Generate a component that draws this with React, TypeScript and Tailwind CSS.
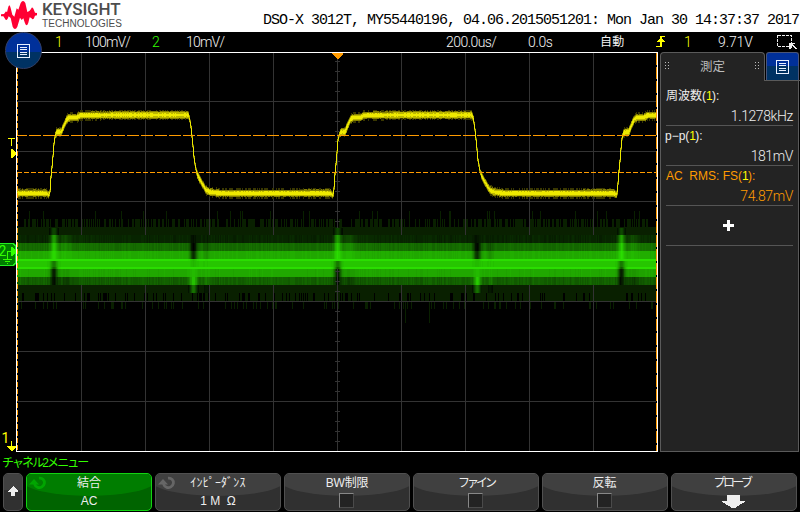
import React from "react";

const LEFT = 17;
const PERIOD = 283.7;

function rng(seed: number) {
  let s = seed;
  return () => {
    s = (s * 1664525 + 1013904223) % 4294967296;
    return s / 4294967296;
  };
}

const SHAPE: [number, number][] = [
  [-64, 193], [47, 193.3], [49.3, 195.5], [50.2, 190], [51, 177], [52.7, 160], [54.3, 140], [56, 133], [58, 132],
  [61.5, 132], [63.3, 127], [67, 119], [70, 117.5], [77, 117.5], [80, 115.4], [120, 115], [188, 115],
  [189.3, 117], [191, 127], [192.7, 143], [194.3, 160], [196.7, 173], [200, 180], [203, 185], [206, 190],
  [210, 192], [220, 193.3], [331, 193.3],
];

function level(x: number) {
  let t = x;
  while (t > 300) t -= PERIOD;
  for (let i = 1; i < SHAPE.length; i++) {
    const [x1, y1] = SHAPE[i];
    const [x0, y0] = SHAPE[i - 1];
    if (t <= x1) return y0 + ((y1 - y0) * (t - x0)) / (x1 - x0);
  }
  return 193.3;
}

type Layer = Map<string, string>;
const put = (layer: Layer, color: string, x: number, y0: number, y1: number) => {
  if (y1 <= y0) return;
  layer.set(color, (layer.get(color) ?? "") + `M${x} ${y0}h1v${y1 - y0}h-1z`);
};

function yellowTrace(): Layer {
  const r = rng(7);
  const out: Layer = new Map();
  const layers: [string, number][] = [["#393700", 0], ["#858000", 1], ["#bcb700", 2], ["#eeea00", 3]];
  for (const [color, k] of layers) {
    for (let x = LEFT; x < 656; x++) {
      const a = level(x), b = level(x + 1);
      const lo = Math.min(a, b), hi = Math.max(a, b);
      const slope = hi - lo;
      const n = r();
      let pad: number;
      if (slope > 3) pad = [2, 1.2, 0.6, -1.2][k];
      else if (slope > 0.8) pad = [3.6, 2.8, 1.8, 0.6][k];
      else pad = [n > 0.45 ? 5.3 : 3.8, n > 0.3 ? 3.8 : 3, 2.6, n > 0.5 ? 1.9 : 1.3][k];
      put(out, color, x, Math.round(lo - pad), Math.round(hi + pad));
    }
  }
  return out;
}

const bump = (x: number, c: number, w: number) => Math.exp(-(((x - c) / w) ** 2));
const green = (v: number) => {
  const q = Math.max(0, Math.round(v / 6) * 6);
  return `rgb(${Math.round(q * 0.19)},${q},0)`;
};

function greenTrace(): { dim: Layer; bright: Layer } {
  const r = rng(41);
  const dim: Layer = new Map();
  const bright: Layer = new Map();
  const DIM = "#092000";
  for (let x = LEFT; x < 656; x++) {
    let up = 0, ring = 0, down = 0;
    for (const c of [53.5, 337.2, 621]) {
      up += bump(x, c, 3.4);
      ring += bump(x, c + 12, 5) * 0.4 + (x > c + 3 ? Math.exp(-(x - c) / 38) * 0.24 : 0);
    }
    for (const c of [193, 476.7]) down += bump(x, c, 3.6) + bump(x, c + 13, 3) * 0.22;
    const n = r();
    const top = n < 0.05 ? 211 : n < 0.5 ? 219 : 227;
    put(dim, DIM, x, top, 293);
    if (r() > 0.2) put(dim, DIM, x, 293, 301);
    if (r() < 0.13) put(dim, DIM, x, 301, r() < 0.06 ? 323 : 309);
    const j = (r() - 0.5) * 14;
    if (up > 0.12) put(bright, green(70 * up), x, 228, 235);
    put(bright, green(36 + j * 0.8 + 120 * up + ring * 65 - down * 20), x, 235, 243);
    put(bright, green(106 + j + 95 * up + ring * 60 - down * 105), x, 243, 251);
    put(bright, green(170 + j * 0.5 + 48 * up + ring * 25 - down * 125), x, 251, 259);
    put(bright, green(224 - down * 35), x, 259, 261);
    put(bright, green(198 + j * 0.4 - up * 80 - down * 15), x, 261, 267);
    put(bright, green(221 - up * 130), x, 267, 269);
    put(bright, green(168 + j * 0.5 - up * 140 - ring * 30 + down * 18), x, 269, 277);
    put(bright, green(96 + j * 1.4 - up * 80 - ring * 60 + down * 100), x, 277, 285);
    if (down > 0.12) put(bright, green(115 * down), x, 285, 293);
  }
  return { dim, bright };
}

const YELLOW = yellowTrace();
const GREEN = greenTrace();

const Layered = ({ layer }: { layer: Layer }) => (
  <g>{[...layer].map(([c, d]) => <path key={c} d={d} fill={c} />)}</g>
);

function Grid() {
  let d = "";
  for (let x = 81; x < 650; x += 64) d += `M${x} 53h1v398h-1z`;
  for (let y = 101; y < 450; y += 50) d += `M17 ${y}h639v1h-639z`;
  for (let y = 61; y < 450; y += 10) d += `M335 ${y}h5v1h-5z`;
  return <path d={d} fill="#333333" />;
}

function Scope() {
  return (
    <svg width="658" height="400" viewBox="0 52 658 400" shapeRendering="crispEdges" className="block shrink-0">
      <Layered layer={GREEN.dim} />
      <Grid />
      <Layered layer={GREEN.bright} />
      <path d="M335 271h5v1h-5zM335 281h5v1h-5zM337 269h1v16h-1z" fill="#333" />
      <Layered layer={YELLOW} />
      <path d="M17 135.5H656" stroke="#ff9b00" strokeDasharray="12 2" strokeDashoffset="2" />
      <path d="M17 172.5H656" stroke="#ff9b00" strokeDasharray="5 2" />
      <rect x="16" y="52" width="642" height="1" fill="#fff" />
      <rect x="16" y="451" width="642" height="1" fill="#fff" />
      <rect x="16" y="52" width="1" height="400" fill="#fff" />
      <rect x="657" y="52" width="1" height="400" fill="#fff" />
      <path d="M17.5 53V451" stroke="#ff9b00" strokeDasharray="5 2" />
      <path d="M656.5 53V451" stroke="#ff9b00" strokeDasharray="12 2" />
      <path d="M332 53h11v1l-5 5h-1l-5-5z" fill="#ff9b00" />
      <path d="M8 138h7v1h-3v7h-1v-7h-3zM11 149h1l4 4v1l-4 4h-1z" fill="#ffff00" />
      <path d="M0 243h14l2 2v19l-2 2H0z" fill="#007d00" />
      <path d="M0 243.5h13l2.5 2.5v17l-2.5 2.5H0" fill="none" stroke="#22ee22" />
      <path d="M11 247h1l4 4v1l-4 4h-1zM7 251h5v1H8v7H7zM3 259h9v1H3zM5 261h5v1H5zM7 263h1v1H7z" fill="#33ff00" />
      <text x="-1.5" y="256" fill="#33ff00" fontSize="14" className="font-['Roboto',sans-serif]">2</text>
      <text x="1.500" y="443" fill="#ffff00" fontSize="14" className="font-['Roboto',sans-serif]">1</text>
      <path d="M11 441h1v5h4v1l-4 4h-1l-4-4v-1h4z" fill="#ffff00" />
    </svg>
  );
}

const MenuGlyph = ({ s }: { s: number }) => (
  <svg width={s} height={s + 1} viewBox="0 0 13 14" shapeRendering="crispEdges" preserveAspectRatio="none" fill="none" stroke="#e8f0ff">
    <path d="M.5.5h12v13H.5zM3 3.5h7M3 5.5h7M3 8.5h7M3 10.5h7" />
  </svg>
);

const Grip = () => (
  <svg width="5" height="8" viewBox="0 0 5 8" shapeRendering="crispEdges" fill="#bbb">
    <path d="M0 0h1v1H0zM3 0h1v1H3zM0 3h1v1H0zM3 3h1v1H3zM0 6h1v1H0zM3 6h1v1H3z" />
  </svg>
);

function Readout({ label, value, color }: { label: React.ReactNode; value: string; color: string }) {
  return (
    <div className={`flex h-10 flex-col border-b border-[#555] ${color}`}>
      <div className="h-5 whitespace-nowrap text-[12px] leading-5">{label}</div>
      <div className="h-5 whitespace-nowrap text-right font-['Roboto',sans-serif] text-[14px] font-light leading-[21px] tracking-[-0.4px]">{value}</div>
    </div>
  );
}

const Src = () => (
  <span className="tracking-[0px]">(<span className="tracking-[-0.8px] text-[#ffff00]">1</span>):</span>
);

function Panel() {
  return (
    <div className="ml-0.5 flex h-[400px] w-[140px] flex-col">
      <div className="flex h-[29px]">
        <div className="flex w-[105px] items-start justify-between rounded-t-[4px] border-x border-t border-[#5a5a5a] bg-[#232323] px-1 pt-[9px]">
          <Grip />
          <span className="-mt-[5px] text-[12.5px] leading-5 text-[#bdbdbd]">測定</span>
          <Grip />
        </div>
        <div className="flex flex-1 border-b border-[#5a5a5a] pl-px">
          <div className="flex w-[33px] items-center justify-center rounded-t-[3px] border-x border-t border-[#4a5578] bg-linear-to-b from-[#00309a] from-50% to-[#003263] to-50%">
            <MenuGlyph s={13} />
          </div>
        </div>
      </div>
      <div className="w-[139px] flex-1 border-x border-b border-[#5a5a5a] bg-[#232323] px-[5px] pt-[5px]">
        <Readout color="text-[#eeeeee]" label={<>周波数<Src /></>} value="1.1278kHz" />
        <Readout color="text-[#eeeeee]" label={<span className="-ml-px">p−p<Src /></span>} value="181mV" />
        <Readout color="text-[#ff9b00]" label={<>AC&nbsp; RMS: FS<Src /></>} value="74.87mV" />
        <div className="flex h-10 items-center justify-center border-b border-[#555] pr-[3px]">
          <svg width="11" height="11" viewBox="0 0 11 11" fill="#fff" shapeRendering="crispEdges"><path d="M4 0h3v4h4v3H7v4H4V7H0V4h4z" /></svg>
        </div>
      </div>
    </div>
  );
}

const Knob = ({ color }: { color: string }) => (
  <svg width="18" height="15" viewBox="0 0 18 15" fill="none" className="absolute left-[2px] top-[2px]">
    <path d="M10 2.2c3.5-.4 5.9 2 5.400 5-.6 3.400-3.900 5.100-6.600 4.200C7.200 10.900 6 9.900 5.500 8" stroke={color} strokeWidth="2.800" />
    <path d="M0 8.500L5 3l5 5.500z" fill={color} />
  </svg>
);

function Key({ children, label, active, knob, track }: { children: React.ReactNode; label: string; active?: boolean; knob?: boolean; track: string }) {
  return (
    <div className={`relative h-[38px] w-[126px] overflow-hidden rounded-[5px] border ${active ? "border-[#12d412] bg-[#006400]" : "border-[#505050] bg-[#303030]"}`}>
      <div className={`absolute -inset-x-1 -top-[8px] h-[30px] rounded-b-[50%] ${active ? "bg-[#007d00]" : "bg-[#404040]"}`} />
      {knob && <Knob color={active ? "#00a500" : "#666666"} />}
      <div className="relative flex flex-col items-center text-[12px] text-[#eeeeee]">
        <div className={`h-[19px] whitespace-nowrap leading-[19px] ${track}`}>{label}</div>
        <div className="flex h-4 items-start justify-center leading-4">{children}</div>
      </div>
    </div>
  );
}

const Box = () => <div className="mr-[2px] size-[15px] border border-[#4a4a4a] border-l-[#888] border-t-[#888] bg-[#232323]" />;

export default function App() {
  return (
    <div className="relative flex h-[512px] w-[800px] flex-col overflow-hidden bg-black font-['Liberation_Sans','Noto_Sans_CJK_JP',sans-serif]">
      <header className="flex h-8 bg-white">
        <svg width="42" height="32" viewBox="0 0 126 96" fill="#ff0033">
          <path d="M3 43L12 42L18 34L21 37L24 24Q28 8 32 24L37 44L43 50L50 25L55 29L62 9Q69-3 76 9L82 36L88 33L93 27Q97 18 101 28L105 38L111 39V46L105 47L102 55Q98 61 94 54L89 52L85 68Q80 82 75 70L70 55L65 60L60 53L52 80Q45 94 38 80L32 54L26 49L23 56Q18 64 14 55L10 49L3 49z" />
        </svg>
        <div className="w-[221px] pt-px text-[#4d4d4d]">
          <div className="h-[17px] font-['Roboto',sans-serif] text-[17px] font-medium leading-[17px] tracking-[-0.12px]">KEYSIGHT</div>
          <div className="h-[11px] text-[10px] leading-[11px] tracking-[0.05px]">TECHNOLOGIES</div>
        </div>
        <div className="whitespace-pre pt-[10px] font-['Liberation_Mono',monospace] text-[15px] leading-[22px] tracking-[-1.002px] text-black">
          DSO-X 3012T, MY55440196, 04.06.2015051201: Mon Jan 30 14:37:37 2017
        </div>
      </header>

      <div className="flex h-5 items-center whitespace-nowrap pl-[55px] font-['Roboto','Noto_Sans_CJK_JP',sans-serif] text-[14px] font-light leading-5 tracking-[-0.8px] text-[#f4f4f4]">
        <span className="w-[30px] text-[#ffff00]">1</span>
        <span className="w-[67px]">100mV/</span>
        <span className="w-[34px] text-[#33ff00]">2</span>
        <span className="w-[260px]">10mV/</span>
        <span className="w-[82px] tracking-[-0.55px]">200.0us/</span>
        <span className="w-[72px] tracking-[-0.35px]">0.0s</span>
        <span className="w-[56px] text-[12px] font-normal tracking-[0.3px]">自動</span>
        <svg width="28" height="12" viewBox="0 0 28 12" shapeRendering="crispEdges" fill="#ffff00">
          <path d="M4 0h5v1H6v2h1v1h1v1h1v1H6v5H0v-1h4V6H1V5h1V4h1V3h1z" />
        </svg>
        <span className="w-[34px] text-[#ffff00]">1</span>
        <span className="w-[59px] tracking-[-0.1px]">9.71V</span>
        <svg width="20" height="16" viewBox="0 0 20 16" shapeRendering="crispEdges" fill="none" stroke="#eee">
          <path d="M.5 1.5h14v11H.5z" strokeDasharray="3 1" />
          <path d="M12 9h6v1h-2v1h1v1h1v1h1v1h1v1h-2v-1h-1v-1h-1v-1h-1v2h-1v1h-2z" fill="#eee" stroke="none" />
        </svg>
      </div>

      <main className="flex h-[400px]">
        <Scope />
        <Panel />
      </main>

      <footer className="flex h-[60px] flex-col">
        <div className="h-[21px] whitespace-nowrap pl-[2px] text-[12px] leading-[22px] tracking-[-1.9px] text-[#33ff00]">チャネル2メニュー</div>
        <div className="flex gap-[3px] pl-[3px]">
          <div className="relative flex h-[38px] w-5 items-center justify-center overflow-hidden rounded-[5px] border border-[#505050] bg-[#303030]">
            <div className="absolute inset-x-0 top-0 h-4 bg-[#404040]" />
            <svg width="10" height="10" viewBox="0 0 10 10" fill="#eee" className="relative -mt-0.5" shapeRendering="crispEdges">
              <path d="M5 0L10 5v1H7v4H3V6H0V5z" />
            </svg>
          </div>
          <Key label="結合" active knob track="">AC</Key>
          <Key label="ｲﾝﾋﾟｰﾀﾞﾝｽ" knob track="tracking-[0.2px]"><span className="whitespace-pre">1 M  Ω</span></Key>
          <Key label="BW制限" track="tracking-[-0.2px]"><Box /></Key>
          <Key label="ファイン" track="tracking-[-3px]"><Box /></Key>
          <Key label="反転" track="-ml-px"><Box /></Key>
          <Key label="プローブ" track="tracking-[-2.6px] -ml-1"><svg width="25" height="13" viewBox="0 0 25 13" fill="#eee" shapeRendering="crispEdges" className="mr-px mt-[2px]">
              <path d="M6 0h13v6h6l-11 7h-3L0 6h6z" />
            </svg>
          </Key>
        </div>
      </footer>

      <div className="absolute left-[5px] top-8 flex size-[37px] items-center justify-center rounded-full border border-[#333f66] bg-linear-to-b from-[#00309a] from-55% to-[#003263] to-55%">
        <MenuGlyph s={13} />
      </div>
    </div>
  );
}
